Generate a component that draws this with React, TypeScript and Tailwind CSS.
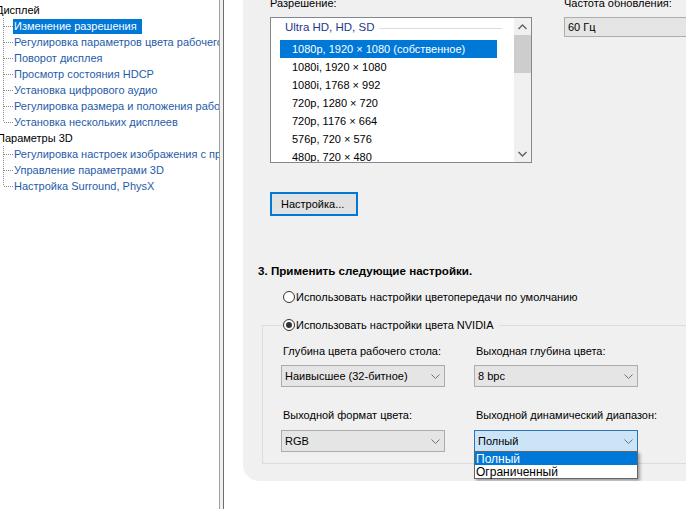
import React from "react";

const Connector = ({ last }: { last?: boolean }) => (
  <svg width="10" height="16" className="shrink-0">
    <line x1="0.5" y1="0" x2="0.5" y2={last ? 8 : 16} stroke="#8a8a8a" strokeDasharray="1 1" />
    <line x1="1" y1="8.5" x2="10" y2="8.5" stroke="#8a8a8a" strokeDasharray="1 1" />
  </svg>
);

const Chevron = ({ up, color = "#606060" }: { up?: boolean; color?: string }) => (
  <svg width="9" height="6" viewBox="0 0 9 6">
    <polyline
      points={up ? "0.5,5 4.5,1 8.5,5" : "0.5,1 4.5,5 8.5,1"}
      fill="none"
      stroke={color}
      strokeWidth="1.4"
    />
  </svg>
);

const Chev2 = () => (
  <svg width="9" height="5" viewBox="0 0 9 5">
    <polyline points="0.5,0.5 4.5,4.5 8.5,0.5" fill="none" stroke="#707070" strokeWidth="1" />
  </svg>
);

const tree1 = [
  "Изменение разрешения",
  "Регулировка параметров цвета рабочего стола",
  "Поворот дисплея",
  "Просмотр состояния HDCP",
  "Установка цифрового аудио",
  "Регулировка размера и положения рабочего стола",
  "Установка нескольких дисплеев",
];
const tree2 = [
  "Регулировка настроек изображения с просмотром",
  "Управление параметрами 3D",
  "Настройка Surround, PhysX",
];

const resolutions = [
  "1080p, 1920 × 1080 (собственное)",
  "1080i, 1920 × 1080",
  "1080i, 1768 × 992",
  "720p, 1280 × 720",
  "720p, 1176 × 664",
  "576p, 720 × 576",
  "480p, 720 × 480",
];

function Combo({ text, active }: { text: string; active?: boolean }) {
  return (
    <div
      className={
        "flex h-[22px] w-[164px] items-center justify-between border pl-[3px] pr-[4px] " +
        (active ? "border-[#2a74b8] bg-[#cce4f7]" : "border-[#acacac] bg-[#e5e5e5]")
      }
    >
      <span className="whitespace-nowrap">{text}</span>
      <Chev2 />
    </div>
  );
}

function Radio({ checked }: { checked?: boolean }) {
  return (
    <div className="flex h-[12px] w-[12px] shrink-0 items-center justify-center rounded-full border border-[#333] bg-white">
      {checked && <div className="h-[6px] w-[6px] rounded-full bg-[#333]" />}
    </div>
  );
}

export default function App() {
  return (
    <div className="flex h-[509px] w-[686px] overflow-hidden bg-white font-['Liberation_Sans',Arial,sans-serif] text-[11px] text-black">
      {/* Left tree */}
      <div className="h-full w-[219px] shrink-0 overflow-hidden bg-white pt-[2px] text-[11px]">
        <div className="ml-[-4px] flex h-[16px] items-center whitespace-nowrap">Дисплей</div>
        {tree1.map((t, i) => (
          <div key={t} className="flex h-[16px] items-center whitespace-nowrap pl-[3px]">
            <Connector last={i === tree1.length - 1} />
            <span
              className={
                i === 0
                  ? "flex h-[15px] items-center bg-[#0078d7] px-[1px] pr-[5px] text-white"
                  : "px-[1px] text-[#1f5ca8]"
              }
            >
              {t}
            </span>
          </div>
        ))}
        <div className="ml-[-3px] flex h-[16px] items-center whitespace-nowrap">Параметры 3D</div>
        {tree2.map((t, i) => (
          <div key={t} className="flex h-[16px] items-center whitespace-nowrap pl-[3px]">
            <Connector last={i === tree2.length - 1} />
            <span className="px-[1px] text-[#1f5ca8]">{t}</span>
          </div>
        ))}
      </div>

      {/* splitter */}
      <div className="h-full w-px shrink-0 bg-[#a0a0a0]" />
      <div className="h-full w-[3px] shrink-0 bg-[#f0f0f0]" />
      <div className="h-full w-px shrink-0 bg-[#6d6d6d]" />
      <div className="h-full w-[19px] shrink-0 bg-white" />

      {/* Right panel */}
      <div className="h-[481px] flex-1 overflow-hidden rounded-bl-[16px] bg-[#f0f0f0] pl-[15px]">
        <div className="flex pl-[12px]">
          <div className="flex flex-col">
            <div className="mt-[-5px] flex h-[16px] items-center">Разрешение:</div>
            <div className="mt-[6px] flex h-[146px] w-[262px] border border-[#828790] bg-white">
              <div className="flex-1 overflow-hidden">
                <div className="flex h-[20px] items-center pl-[14px] pr-[12px]">
                  <span className="whitespace-nowrap text-[11.5px] text-[#1e3a8a]">Ultra HD, HD, SD</span>
                  <div className="ml-[5px] h-px flex-1 bg-[#dcdcdc]" />
                </div>
                <div className="mt-[2px]">
                  {resolutions.map((r, i) => (
                    <div
                      key={r}
                      className={
                        "ml-[9px] flex h-[18px] w-[217px] items-center whitespace-nowrap pl-[12px] " +
                        (i === 0 ? "bg-[#0078d7] text-white" : "")
                      }
                    >
                      {r}
                    </div>
                  ))}
                </div>
              </div>
              <div className="flex w-[17px] shrink-0 flex-col bg-[#f0f0f0]">
                <div className="flex h-[17px] items-center justify-center">
                  <Chevron up />
                </div>
                <div className="h-[38px] bg-[#cdcdcd]" />
                <div className="flex-1" />
                <div className="flex h-[17px] items-center justify-center">
                  <Chevron />
                </div>
              </div>
            </div>
            <div className="mt-[29px] flex h-[24px] w-[88px] items-center border-2 border-[#0078d7] bg-[#e1e1e1] pl-[9px]">
              Настройка...
            </div>
          </div>
          <div className="ml-[32px] flex flex-col">
            <div className="mt-[-5px] flex h-[16px] items-center whitespace-nowrap">Частота обновления:</div>
            <div className="mt-[6px] flex h-[20px] w-[140px] items-center border border-[#adadad] bg-[#e5e5e5] pl-[3px]">
              60 Гц
            </div>
          </div>
        </div>

        <div className="mt-[47px] flex h-[16px] items-center text-[11.6px] font-bold">
          3. Применить следующие настройки.
        </div>

        <div className="ml-[25px] mt-[10px] flex h-[16px] items-center gap-[1px] whitespace-nowrap">
          <Radio />
          <span>Использовать настройки цветопередачи по умолчанию</span>
        </div>

        <div className="ml-[4px] mr-[-10px] mt-[20px] border border-[#dcdcdc] pb-[11px] pl-[18px]">
          <div className="ml-[2px] mt-[-9px] flex h-[16px] w-fit items-center gap-[1px] whitespace-nowrap bg-[#f0f0f0] pr-[5px]">
            <Radio checked />
            <span>Использовать настройки цвета NVIDIA</span>
          </div>
          <div className="mt-[10px] grid grid-cols-[164px_164px] gap-x-[29px]">
            <div className="flex h-[16px] items-center whitespace-nowrap pl-[2px]">Глубина цвета рабочего стола:</div>
            <div className="flex h-[16px] items-center whitespace-nowrap pl-[2px]">Выходная глубина цвета:</div>
            <div className="mt-[6px]">
              <Combo text="Наивысшее (32-битное)" />
            </div>
            <div className="mt-[6px]">
              <Combo text="8 bpc" />
            </div>
            <div className="mt-[20px] flex h-[16px] items-center whitespace-nowrap pl-[2px]">Выходной формат цвета:</div>
            <div className="mt-[20px] flex h-[16px] items-center whitespace-nowrap pl-[2px]">
              Выходной динамический диапазон:
            </div>
            <div className="mt-[7px]">
              <Combo text="RGB" />
            </div>
            <div className="relative mt-[7px]">
              <Combo text="Полный" active />
              <div className="absolute left-0 top-[21px] z-10 w-[164px] border border-[#646464] bg-white text-[12px] shadow-[2px_2px_3px_rgba(0,0,0,0.35)]">
                <div className="flex h-[13px] items-center bg-[#0078d7] pl-[1px] text-white">Полный</div>
                <div className="flex h-[13px] items-center pl-[1px]">Ограниченный</div>
              </div>
            </div>
          </div>
        </div>
      </div>
    </div>
  );
}
